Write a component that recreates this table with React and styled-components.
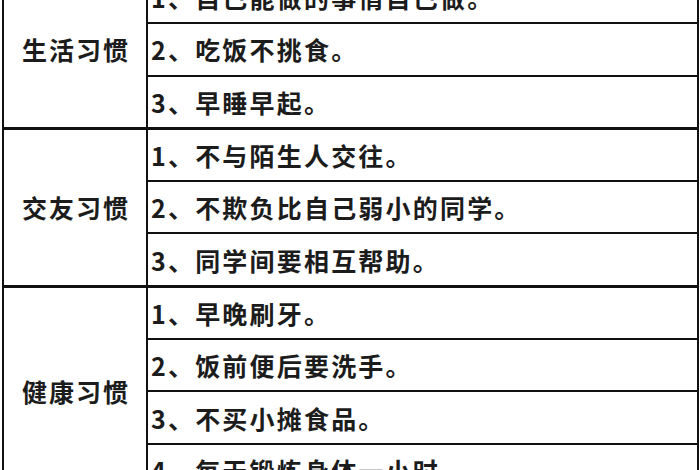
import React from "react";
import styled, { createGlobalStyle } from "styled-components";

const Global = createGlobalStyle`
  html, body { margin: 0; padding: 0; background: #fff; overflow: hidden; }
  body { width: 700px; height: 470px; }
`;

const Viewport = styled.div`
  width: 700px;
  height: 470px;
  overflow: hidden;
  background: #fff;
`;

const Sheet = styled.div`
  margin-top: -28px;
  margin-left: 2px;
  width: 697px;
  box-sizing: border-box;
  border-left: 2px solid #111;
  border-right: 2px solid #111;
  display: flex;
  flex-direction: column;
  font-family: "Noto Sans CJK SC", "Noto Sans", sans-serif;
  font-weight: 700;
  color: #1c1c1c;
`;

const Group = styled.div`
  display: grid;
  grid-template-columns: 144px 1fr;
  border-top: ${(p) => (p.$first ? "0" : "3px solid #111")};
`;

const Label = styled.div`
  grid-row: 1 / span ${(p) => p.$span};
  border-right: 2px solid #111;
  display: flex;
  align-items: center;
  justify-content: center;
  font-size: 25px;
  letter-spacing: 2px;
  padding-left: 2px;
`;

const Item = styled.div`
  grid-column: 2;
  height: 50.3px;
  display: flex;
  align-items: center;
  padding-left: 3px;
  font-size: 25px;
  letter-spacing: 2.2px;
  white-space: nowrap;
  border-top: ${(p) => (p.$first ? "0" : "2px solid #111")};
`;

const groups = [
  {
    label: "生活习惯",
    items: ["1、自己能做的事情自己做。", "2、吃饭不挑食。", "3、早睡早起。"],
  },
  {
    label: "交友习惯",
    items: ["1、不与陌生人交往。", "2、不欺负比自己弱小的同学。", "3、同学间要相互帮助。"],
  },
  {
    label: "健康习惯",
    items: ["1、早晚刷牙。", "2、饭前便后要洗手。", "3、不买小摊食品。", "4、每天锻炼身体一小时。"],
  },
];

export default function App() {
  return (
    <Viewport>
      <Global />
      <Sheet>
        {groups.map((g, gi) => (
          <Group key={g.label} $first={gi === 0}>
            <Label $span={g.items.length}>{g.label}</Label>
            {g.items.map((t, i) => (
              <Item key={t} $first={i === 0}>
                {t}
              </Item>
            ))}
          </Group>
        ))}
      </Sheet>
    </Viewport>
  );
}
